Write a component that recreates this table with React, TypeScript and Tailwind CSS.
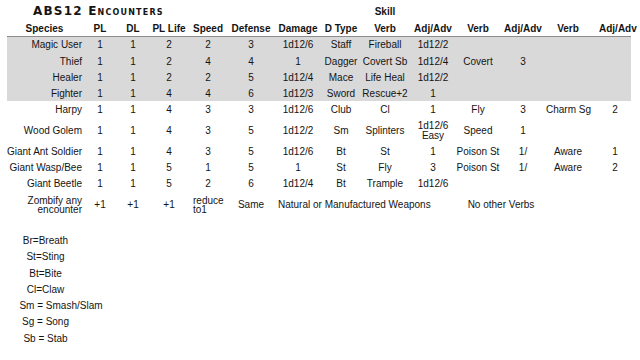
import type { ReactNode } from "react";

const grid =
  "grid grid-cols-[77px_32px_34px_38px_40px_46px_48px_38px_50px_46px_44px_46px_44px_41px] items-center";

type Cell = ReactNode;

const rows: { h: string; cells: Cell[] }[] = [
  { h: "h-[16px]", cells: ["Magic User", "1", "1", "2", "2", "3", "1d12/6", "Staff", "Fireball", "1d12/2", "", "", "", ""] },
  { h: "h-[17px]", cells: ["Thief", "1", "1", "2", "4", "4", "1", "Dagger", "Covert Sb", "1d12/4", "Covert", "3", "", ""] },
  { h: "h-[16px]", cells: ["Healer", "1", "1", "2", "2", "5", "1d12/4", "Mace", "Life Heal", "1d12/2", "", "", "", ""] },
  { h: "h-[15px]", cells: ["Fighter", "1", "1", "4", "4", "6", "1d12/3", "Sword", "Rescue+2", "1", "", "", "", ""] },
];

const plain: { h: string; cells: Cell[] }[] = [
  { h: "h-[17px]", cells: ["Harpy", "1", "1", "4", "3", "3", "1d12/6", "Club", "Cl", "1", "Fly", "3", "Charm Sg", "2"] },
  {
    h: "h-[26px]",
    cells: [
      "Wood Golem", "1", "1", "4", "3", "5", "1d12/2", "Sm", "Splinters",
      <>1d12/6<br />Easy</>,
      "Speed", "1", "", "",
    ],
  },
  { h: "h-[16px]", cells: ["Giant Ant Soldier", "1", "1", "4", "3", "5", "1d12/6", "Bt", "St", "1", "Poison St", "1/", "Aware", "1"] },
  { h: "h-[16px]", cells: ["Giant Wasp/Bee", "1", "1", "5", "1", "5", "1", "St", "Fly", "3", "Poison St", "1/", "Aware", "2"] },
  { h: "h-[16px]", cells: ["Giant Beetle", "1", "1", "5", "2", "6", "1d12/4", "Bt", "Trample", "1d12/6", "", "", "", ""] },
];

const headers = ["Species", "PL", "DL", "PL Life", "Speed", "Defense", "Damage", "D Type", "Verb", "Adj/Adv", "Verb", "Adj/Adv", "Verb", "Adj/Adv"];

const legend = ["Br=Breath", "St=Sting", "Bt=Bite", "Cl=Claw", "Sm = Smash/Slam", "Sg = Song", "Sb = Stab"];

function cellClass(i: number) {
  if (i === 0) return "text-right pr-[2px] whitespace-nowrap";
  if (i === 13) return "text-center pl-[9px] whitespace-nowrap";
  return "text-center whitespace-nowrap";
}

function Row({ h, cells }: { h: string; cells: Cell[] }) {
  return (
    <div className={`${grid} ${h}`}>
      {cells.map((c, i) => (
        <div key={i} className={cellClass(i)}>
          {c}
        </div>
      ))}
    </div>
  );
}

export default function App() {
  return (
    <div className="w-[640px] h-[360px] bg-white text-[#141414] font-['Liberation_Sans',Arial,sans-serif] text-[10px] leading-[10px] pl-[7px] overflow-hidden">
      <div className="w-[624px]">
        <div className={`${grid} h-[21px]`}>
          <div className="col-span-8 pl-[26px] pt-[1px] font-['DejaVu_Sans',sans-serif] font-bold text-[12px] tracking-[1.2px] [font-variant:small-caps]">
            ABS12 Encounters
          </div>
          <div className="text-center font-bold pt-[2px]">Skill</div>
        </div>

        <div className={`${grid} h-[15px] font-bold`}>
          {headers.map((t, i) => (
            <div key={i} className={i === 0 ? "text-center pr-[2px]" : i === 13 ? "text-center pl-[9px] whitespace-nowrap" : "text-center whitespace-nowrap"}>
              {t}
            </div>
          ))}
        </div>

        <div className="bg-[#d9d9d9] border-t border-[#8c8c8c]">
          {rows.map((r, i) => (
            <Row key={i} h={r.h} cells={r.cells} />
          ))}
        </div>

        {plain.map((r, i) => (
          <Row key={i} h={r.h} cells={r.cells} />
        ))}

        <div className={`${grid} h-[26px]`}>
          <div className="text-right pr-[2px] leading-[9.5px]">
            Zombify any
            <br />
            encounter
          </div>
          <div className="text-center">+1</div>
          <div className="text-center">+1</div>
          <div className="text-center">+1</div>
          <div className="text-left pl-[5px] leading-[9.5px]">
            reduce
            <br />
            to1
          </div>
          <div className="text-center">Same</div>
          <div className="col-span-4 pl-[4px] whitespace-nowrap">Natural or Manufactured Weapons</div>
          <div className="col-span-2 text-center whitespace-nowrap">No other Verbs</div>
          <div />
          <div />
        </div>
      </div>

      <div className="mt-[15px] w-[77px] flex flex-col items-center">
        {legend.map((t) => (
          <div key={t} className={`h-[16.3px] leading-[16.3px] whitespace-nowrap ${t.startsWith("Sm") ? "ml-[31px]" : ""}`}>
            {t}
          </div>
        ))}
      </div>
    </div>
  );
}
